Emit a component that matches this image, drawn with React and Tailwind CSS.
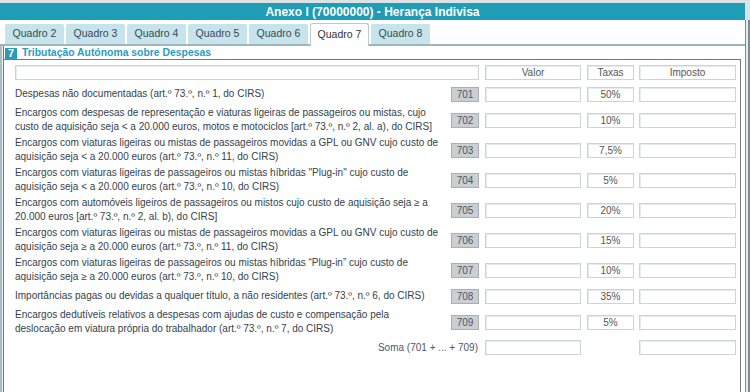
import React from "react";

const rows = [
  { code: "701", rate: "50%", h: "h-[22px]", lines: ["Despesas não documentadas (art.º 73.º, n.º 1, do CIRS)"] },
  {
    code: "702",
    rate: "10%",
    h: "h-[30px]",
    lines: [
      "Encargos com despesas de representação e viaturas ligeiras de passageiros ou mistas, cujo",
      "custo de aquisição seja < a 20.000 euros, motos e motociclos [art.º 73.º, n.º 2, al. a), do CIRS]",
    ],
  },
  {
    code: "703",
    rate: "7,5%",
    h: "h-[30px]",
    lines: [
      "Encargos com viaturas ligeiras ou mistas de passageiros movidas a GPL ou GNV cujo custo de",
      "aquisição seja < a 20.000 euros (art.º 73.º, n.º 11, do CIRS)",
    ],
  },
  {
    code: "704",
    rate: "5%",
    h: "h-[30px]",
    lines: [
      'Encargos com viaturas ligeiras de passageiros ou mistas híbridas "Plug-in" cujo custo de',
      "aquisição seja < a 20.000 euros (art.º 73.º, n.º 10, do CIRS)",
    ],
  },
  {
    code: "705",
    rate: "20%",
    h: "h-[30px]",
    lines: [
      "Encargos com automóveis ligeiros de passageiros ou mistos cujo custo de aquisição seja ≥ a",
      "20.000 euros [art.º 73.º, n.º 2, al. b), do CIRS]",
    ],
  },
  {
    code: "706",
    rate: "15%",
    h: "h-[30px]",
    lines: [
      "Encargos com viaturas ligeiras ou mistas de passageiros movidas a GPL ou GNV cujo custo de",
      "aquisição seja ≥ a 20.000 euros (art.º 73.º, n.º 11, do CIRS)",
    ],
  },
  {
    code: "707",
    rate: "10%",
    h: "h-[30px]",
    lines: [
      "Encargos com viaturas ligeiras de passageiros ou mistas híbridas “Plug-in” cujo custo de",
      "aquisição seja ≥ a 20.000 euros (art.º 73.º, n.º 10, do CIRS)",
    ],
  },
  {
    code: "708",
    rate: "35%",
    h: "h-[22px]",
    lines: ["Importâncias pagas ou devidas a qualquer título, a não residentes (art.º 73.º, n.º 6, do CIRS)"],
  },
  {
    code: "709",
    rate: "5%",
    h: "h-[30px]",
    lines: [
      "Encargos dedutíveis relativos a despesas com ajudas de custo e compensação pela",
      "deslocação em viatura própria do trabalhador (art.º 73.º, n.º 7, do CIRS)",
    ],
  },
];

const tabs = ["Quadro 2", "Quadro 3", "Quadro 4", "Quadro 5", "Quadro 6", "Quadro 7", "Quadro 8"];

function Field({ className = "", children }) {
  return (
    <div
      className={
        "h-[15px] bg-white border border-[#cdd3d6] shadow-[inset_1px_1px_0_#e6eaec] flex items-center justify-center text-[#555] " +
        className
      }
    >
      {children}
    </div>
  );
}

export default function App() {
  return (
    <div className="w-[750px] h-[392px] bg-white overflow-hidden flex font-['Liberation_Sans',Arial,sans-serif] text-[10px]">
      <div className="w-[745px] flex flex-col">
        {/* Title */}
        <div className="h-[3px] bg-[#dde3e5]" />
        <div className="h-[17px] bg-[#1f9db6] text-white font-bold text-[12px] flex items-center justify-center">
          Anexo I (70000000) - Herança Indivisa
        </div>

        {/* Tabs */}
        <div className="flex gap-[2px] pl-[5px] pt-[3px] h-[26px] border-b-2 border-[#9cb7be] text-[10.5px]">
          {tabs.map((t) =>
            t === "Quadro 7" ? (
              <div
                key={t}
                className="w-[59px] -mb-[2px] bg-white border border-b-0 border-[#b9c9ce] rounded-t-[3px] flex items-center justify-center text-[#333]"
              >
                {t}
              </div>
            ) : (
              <div
                key={t}
                className="w-[59px] mt-[1px] bg-[#c7e3eb] rounded-t-[2px] flex items-center justify-center text-[#3a4a52]"
              >
                {t}
              </div>
            )
          )}
        </div>

        {/* Section */}
        <div className="flex-1 flex">
          <div className="w-[4px] border-l-2 border-[#a9bec4] bg-[#eef2f3]" />
          <div className="flex-1 flex flex-col border-l border-[#6f7a7f] mr-[4px]">
            <div className="h-[12px] mt-[1px] flex items-center">
              <div className="w-[12px] h-[11px] ml-[1px] bg-[#2a9cb6] text-white font-bold text-[11px] flex items-center justify-center">
                7
              </div>
              <div className="ml-[5px] text-[#2b9cbf] font-bold text-[10.4px]">Tributação Autónoma sobre Despesas</div>
            </div>

            <div className="flex-1 border-t border-r border-[#6f7a7f] pl-[11px] pr-[4px] pt-[5px] text-[#33424c]">
              {/* Header */}
              <div className="flex items-center">
                <Field className="w-[464px]" />
                <Field className="w-[96px] ml-[6px]">Valor</Field>
                <Field className="w-[47px] ml-[6px]">Taxas</Field>
                <Field className="w-[97px] ml-[5px]">Imposto</Field>
              </div>

              <div className="mt-[3px]">
                {rows.map((r) => (
                  <div key={r.code} className={"flex items-center " + r.h}>
                    <div className="w-[436px] leading-[14px]">
                      {r.lines.map((l, i) => (
                        <div key={i} className="whitespace-nowrap">
                          {l}
                        </div>
                      ))}
                    </div>
                    <div className="w-[28px] h-[15px] bg-[#c9cfd2] border border-[#a9b0b3] text-[#4d5960] flex items-center justify-center">
                      {r.code}
                    </div>
                    <Field className="w-[96px] ml-[6px]" />
                    <Field className="w-[47px] ml-[6px] border-[#a3abaf]">{r.rate}</Field>
                    <Field className="w-[97px] ml-[5px]" />
                  </div>
                ))}

                <div className="flex items-center h-[20px]">
                  <div className="w-[464px] text-right pr-[1px] text-[#4d5960]">Soma (701 + ... + 709)</div>
                  <Field className="w-[96px] ml-[6px]" />
                  <div className="w-[47px] ml-[6px]" />
                  <Field className="w-[97px] ml-[5px]" />
                </div>
              </div>
            </div>
          </div>
        </div>
      </div>
      <div className="w-[5px] flex flex-col">
        <div className="h-[20px] bg-[#dde3e5]" />
        <div className="flex-1 border-l border-r-2 border-[#7f8b90] bg-[#e6ebed]" />
      </div>
    </div>
  );
}
